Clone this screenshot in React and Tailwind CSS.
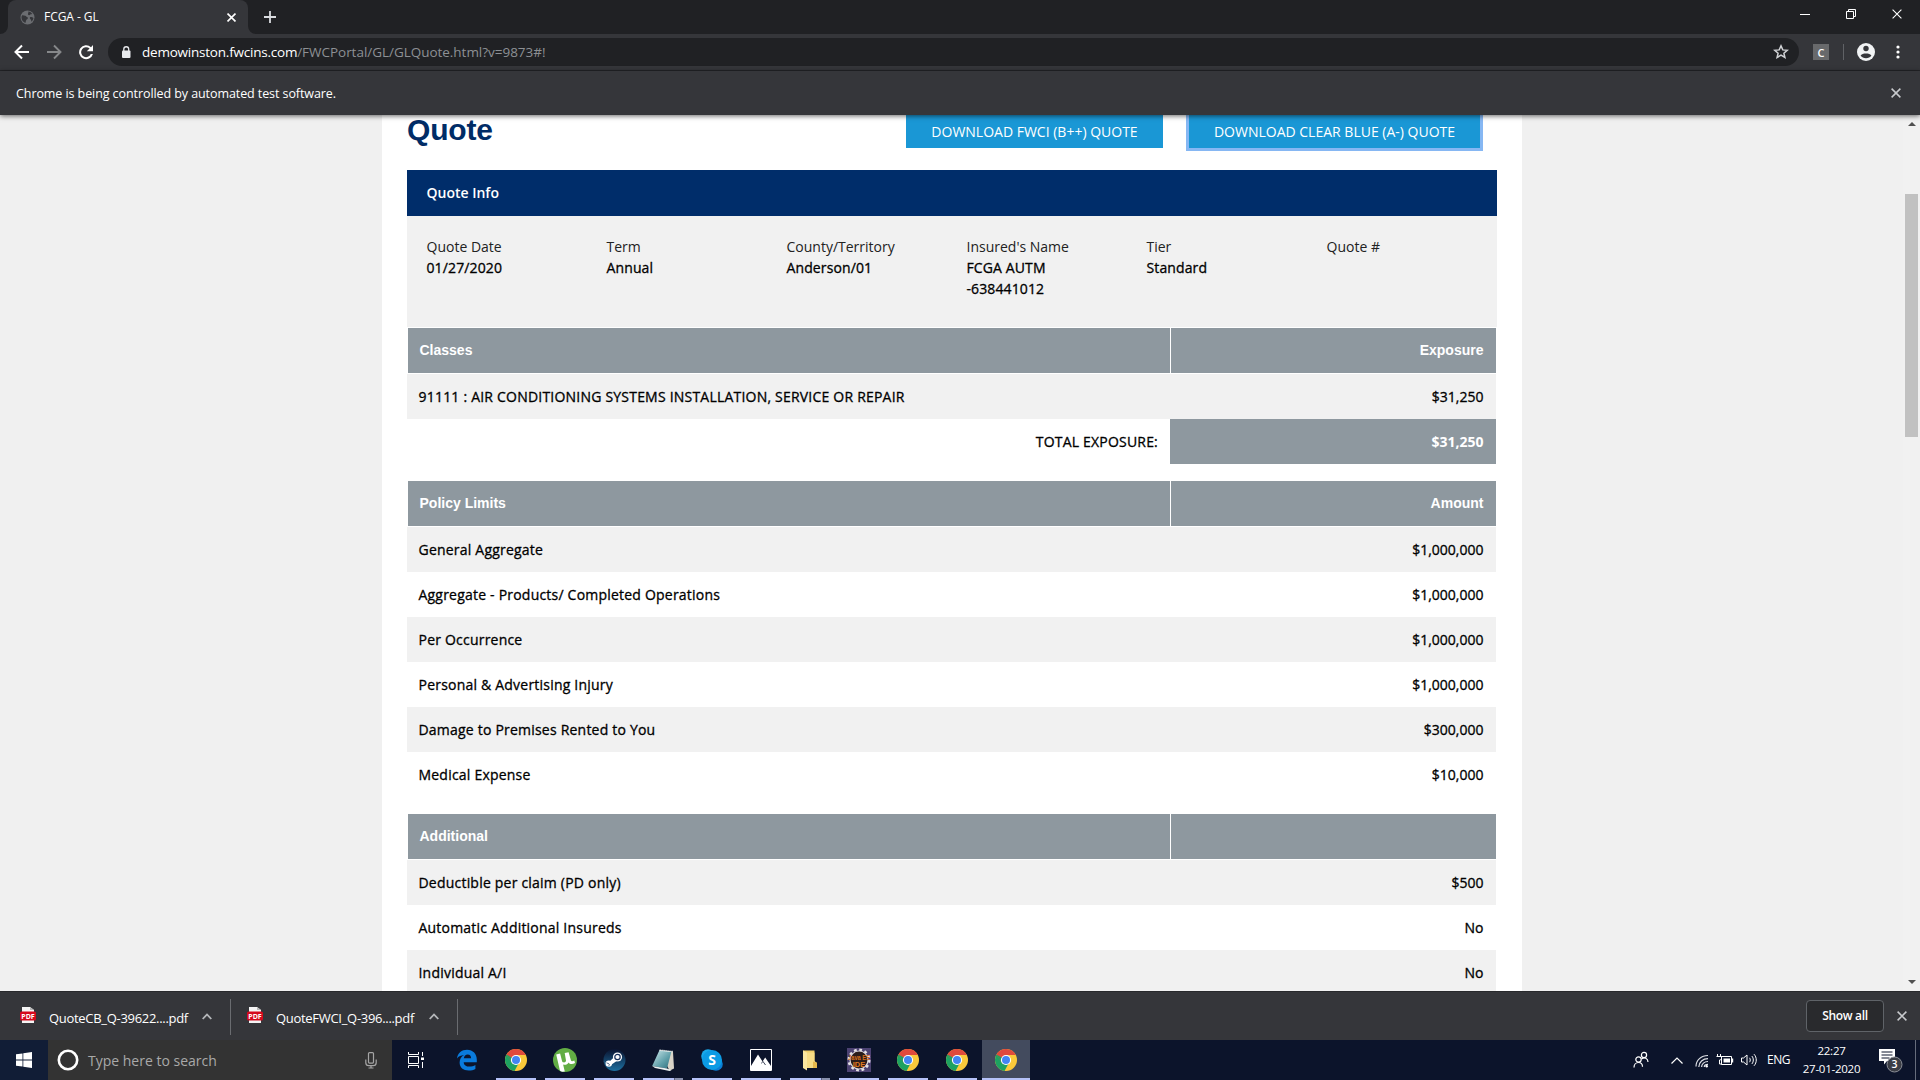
import React from 'react';

const LIMITS = [
  ['General Aggregate', '$1,000,000'],
  ['Aggregate - Products/ Completed Operations', '$1,000,000'],
  ['Per Occurrence', '$1,000,000'],
  ['Personal & Advertising Injury', '$1,000,000'],
  ['Damage to Premises Rented to You', '$300,000'],
  ['Medical Expense', '$10,000'],
];

const ADDITIONAL = [
  ['Deductible per claim (PD only)', '$500'],
  ['Automatic Additional Insureds', 'No'],
  ['Individual A/I', 'No'],
];

const INFO = [
  ['Quote Date', ['01/27/2020']],
  ['Term', ['Annual']],
  ['County/Territory', ['Anderson/01']],
  ["Insured's Name", ['FCGA AUTM', '-638441012']],
  ['Tier', ['Standard']],
  ['Quote #', []],
];

/* ---------- browser chrome ---------- */

function Cross({ size, width, color = '#fff' }) {
  return (
    <svg width={size} height={size} viewBox="0 0 10 10" fill="none" stroke={color} strokeWidth={width}>
      <path d="M.6.6l8.8 8.8M9.4.6L.6 9.4" />
    </svg>
  );
}

function TabStrip() {
  return (
    <div className="flex h-[34px] shrink-0 bg-[#202124] pl-2">
      <div className="relative flex w-[240px] items-center rounded-t-lg bg-[#35363a]">
        <svg className="absolute -left-2 bottom-0" width="8" height="8"><path d="M8 0v8H0a8 8 0 0 0 8-8z" fill="#35363a" /></svg>
        <svg className="absolute -right-2 bottom-0" width="8" height="8"><path d="M0 0v8h8a8 8 0 0 1-8-8z" fill="#35363a" /></svg>
        <svg className="ml-3 shrink-0" width="15" height="15" viewBox="0 0 15 15">
          <circle cx="7.5" cy="7.5" r="7" fill="#6b6d71" />
          <path d="M2.2 5.2c1.2-.2 2 .5 3 .5s1.200 1.300 2.300 1.600c1 .3.2 2-.8 2.300-.8.3-.6 1.700-1.300 3.300C2.900 12 1.500 9.800 1.500 7.500c0-.8.2-1.600.7-2.300zM8.300 1.500c1.800.2 3.200 1.200 4.100 2.600-.9.3-1.700-.2-2.300.6-.6.7-1.800.5-2.100-.3-.3-1 .8-1.500.3-2.900zM10 7.300c1.200-.6 2.500-.2 3.400.8-.1 1.400-.8 2.700-1.900 3.600-.4-1-.3-1.800-1-2.400-.6-.5-1-1.500-.5-2z" fill="#35363a" />
        </svg>
        <span className="ml-[9px] text-[12px] tracking-[-0.05px] text-white">FCGA - GL</span>
        <span className="ml-auto mr-[12px]"><Cross size={9} width={1.8} /></span>
      </div>
      <svg className="ml-4 mt-[11px]" width="12" height="12" fill="none" stroke="#dadce0" strokeWidth="1.8"><path d="M6 0v12M0 6h12" /></svg>
      <div className="ml-auto mr-[18px] flex h-[28px] items-center gap-[36px]">
        <span className="h-px w-[10px] bg-white" />
        <svg width="10" height="10" fill="none" stroke="#fff"><path d="M.5 2.500h7v7h-7zM2.500 2.500v-2h7v7h-2" /></svg>
        <Cross size={10} width={1.1} />
      </div>
    </div>
  );
}

function Toolbar() {
  return (
    <div className="flex h-[37px] shrink-0 items-center border-b border-[#242528] bg-[#35363a] pl-[14px] pr-[20px]">
      <svg width="16" height="16" viewBox="0 0 16 16" fill="none" stroke="#fff" strokeWidth="2"><path d="M15 8H2.200M8 1.500L1.500 8 8 14.500" /></svg>
      <svg className="ml-4" width="16" height="16" viewBox="0 0 16 16" fill="none" stroke="#86888a" strokeWidth="1.900"><path d="M1 8h12.800M8 1.500L14.500 8 8 14.500" /></svg>
      <svg className="ml-4" width="16" height="16" viewBox="0 0 16 16"><path d="M13 3.200A7 7 0 1 0 14.900 10h-2.100A5 5 0 1 1 11.600 4.500L8.800 7.200H15V1z" fill="#fff" /></svg>
      <div className="ml-[14px] flex h-[28px] flex-1 items-center rounded-full bg-[#202124] pl-[13px] pr-[10px]">
        <svg width="10" height="13" viewBox="0 0 10 13"><rect x="1" y="4.500" width="8.500" height="7.500" rx="1" fill="#e8eaed" /><path d="M2.800 5V3.200a2.450 2.450 0 0 1 4.900 0V5" fill="none" stroke="#e8eaed" strokeWidth="1.300" /></svg>
        <span className="ml-[11px] text-[13.5px] tracking-[-0.22px] text-white">demowinston.fwcins.com</span>
        <span className="text-[13.5px] tracking-[-0.03px] text-[#8d9094]">/FWCPortal/GL/GLQuote.html?v=9873#!</span>
        <svg className="ml-auto" width="16" height="16" viewBox="0 0 16 16" fill="none" stroke="#d0d2d5" strokeWidth="1.500"><path d="M8 1.900l1.800 4 4.400.4-3.300 2.900 1 4.300L8 11.200l-3.900 2.300 1-4.300L1.800 6.300l4.400-.4z" /></svg>
      </div>
      <span className="ml-[14px] flex size-4 items-center justify-center bg-[#68696b] text-[11px] font-semibold leading-none text-white">C</span>
      <span className="ml-[14px] h-4 w-px bg-[#606266]" />
      <svg className="ml-[13px]" width="18" height="18" viewBox="0 0 18 18"><circle cx="9" cy="9" r="9" fill="#f1f3f4" /><circle cx="9" cy="5.500" r="2.700" fill="#35363a" /><path d="M3.600 12.600C4.200 10.900 6.800 10.400 9 10.400s4.800.5 5.400 2.200C13.200 14.300 11.300 15.300 9 15.300s-4.200-1-5.400-2.700z" fill="#35363a" /></svg>
      <svg className="ml-[21px]" width="4" height="14" fill="#fff"><circle cx="2" cy="2" r="1.600" /><circle cx="2" cy="7" r="1.600" /><circle cx="2" cy="12" r="1.600" /></svg>
    </div>
  );
}

function InfoBar() {
  return (
    <div className="relative z-10 flex h-[44px] shrink-0 items-center bg-[#35363a] pl-4 pr-[19px] shadow-[0_1px_5px_rgba(0,0,0,0.6)]">
      <span className="pt-[2px] text-[12.5px] tracking-[-0.08px] text-white">Chrome is being controlled by automated test software.</span>
      <span className="ml-auto"><Cross size={10} width={1.5} color="#c8cacd" /></span>
    </div>
  );
}

/* ---------- quote page ---------- */

function HeadRow({ left, right }) {
  return (
    <div className="flex h-[46px] gap-px border-b border-white pl-px pr-px font-['Liberation_Sans',sans-serif] text-[14px] font-bold text-white">
      <div className="flex w-[762px] items-center bg-[#8e989f] pl-[11.5px]">{left}</div>
      <div className="flex flex-1 items-center justify-end bg-[#8e989f] pr-[12.5px]">{right}</div>
    </div>
  );
}

function Rows({ items }) {
  return items.map(([name, value], i) => (
    <div key={name} className={`mr-px flex h-[45px] items-center justify-between pl-[11.5px] pr-[12.5px] [-webkit-text-stroke:0.3px_#000] ${i % 2 ? 'bg-white' : 'bg-[#f1f1f1]'}`}>
      <span className="tracking-[0.21px]">{name}</span>
      <span>{value}</span>
    </div>
  ));
}

function QuotePage() {
  return (
    <div className="w-[1140px] bg-white px-[25px] text-[14px] text-black">
      <div className="flex h-[55px] items-start">
        <h1 className="font-['Liberation_Sans',sans-serif] text-[30px] font-bold leading-[30px] tracking-[-0.2px] text-[#002c66]">Quote</h1>
        <div className="ml-auto mr-[17px] flex gap-[26px] text-white">
          <button className="h-[33px] w-[257px] bg-[#1a97d5]">DOWNLOAD FWCI (B++) QUOTE</button>
          <button className="h-[33px] w-[291px] bg-[#1a97d5] outline-[3px] outline-[#86b7f3]">DOWNLOAD CLEAR BLUE (A-) QUOTE</button>
        </div>
      </div>
      <div className="flex h-[46px] items-center bg-[#002d6a] pb-px pl-[19.5px] font-semibold text-white">Quote Info</div>
      <div className="flex h-[111px] bg-[#f1f1f1] pl-[19.5px] pt-5 leading-[21px]">
        {INFO.map(([label, lines]) => (
          <div key={label} className="w-[180px] shrink-0 last:w-[150px]">
            <div className="text-[#222]">{label}</div>
            {lines.map((l) => <div key={l} className="tracking-[0.12px] [-webkit-text-stroke:0.3px_#000]">{l}</div>)}
          </div>
        ))}
      </div>
      <div className="h-px bg-white" />
      <HeadRow left="Classes" right="Exposure" />
      <Rows items={[['91111 : AIR CONDITIONING SYSTEMS INSTALLATION, SERVICE OR REPAIR', '$31,250']]} />
      <div className="mr-px flex h-[45px]">
        <div className="flex w-[763px] items-center justify-end pr-[12px] tracking-[0.2px] [-webkit-text-stroke:0.3px_#000]">TOTAL EXPOSURE:</div>
        <div className="flex flex-1 items-center justify-end bg-[#8e989f] pr-[12.5px] font-bold text-white">$31,250</div>
      </div>
      <div className="mt-[17px]"><HeadRow left="Policy Limits" right="Amount" /></div>
      <Rows items={LIMITS} />
      <div className="mt-[17px]"><HeadRow left="Additional" right="" /></div>
      <Rows items={ADDITIONAL} />
    </div>
  );
}

function Scrollbar() {
  return (
    <div className="flex w-[17px] flex-col items-center bg-[#f1f1f1] pt-[7px] pb-[7px]">
      <svg width="8" height="4"><path d="M0 4l4-4 4 4z" fill="#505050" /></svg>
      <div className="mt-[68px] h-[243px] w-[13px] bg-[#c1c1c1]" />
      <svg className="mt-auto" width="8" height="4"><path d="M0 0l4 4 4-4z" fill="#505050" /></svg>
    </div>
  );
}

/* ---------- download shelf ---------- */

function Download({ name }) {
  return (
    <div className="flex h-full w-[227px] items-center">
      <svg className="-mt-[3px] ml-[15px]" width="18" height="18" viewBox="0 0 18 18">
        <path d="M3 1h8l4 3v13H3z" fill="#f4f4f4" /><path d="M11 1v3h4z" fill="#b9b9b9" />
        <rect x="1" y="5.500" width="16" height="9" rx="1.500" fill="#d5091d" />
        <text x="9" y="12.600" textAnchor="middle" fontSize="7" fontWeight="700" fill="#fff" fontFamily="Open Sans">PDF</text>
      </svg>
      <span className="ml-[12px] mt-[5px] w-[140px] text-[13px] tracking-[-0.3px] text-white">{name}</span>
      <svg className="ml-[13px]" width="10" height="7" fill="none" stroke="#b5b7ba" strokeWidth="1.800"><path d="M.7 6L5 1.500 9.300 6" /></svg>
      <span className="ml-auto mt-px h-[36px] w-px bg-[#6a6c70]" />
    </div>
  );
}

function Shelf() {
  return (
    <div className="flex h-[49px] shrink-0 items-center border-t border-[#28292c] bg-[#35363a] pl-1 pr-[13px]">
      <Download name="QuoteCB_Q-39622....pdf" />
      <Download name="QuoteFWCI_Q-396....pdf" />
      <button className="ml-auto h-[32px] w-[78px] rounded-[4px] border border-[#5f6368] bg-[#292a2d] text-[12px] font-semibold tracking-[-0.35px] text-white">Show all</button>
      <span className="ml-[13px]"><Cross size={10} width={1.5} color="#c8cacd" /></span>
    </div>
  );
}

/* ---------- taskbar ---------- */

function Chrome() {
  return (
    <svg width="24" height="24" viewBox="0 0 24 24">
      <circle cx="12" cy="12" r="11" fill="#fbc93a" />
      <path d="M12 12L2.470 6.500A11 11 0 0 0 10.500 22.900l4.800-9z" fill="#1da261" />
      <path d="M12 12V7h9.800A11 11 0 0 0 2.470 6.500l5.200 8z" fill="#e04a3c" />
      <path d="M2.470 6.500L7.670 14.500 12 12z" fill="#1da261" />
      <circle cx="12" cy="12" r="5.100" fill="#fff" /><circle cx="12" cy="12" r="4" fill="#4285f4" />
    </svg>
  );
}

function Edge() {
  return (
    <svg width="22" height="22" viewBox="0 0 22 22"><path d="M1 9.500C1.700 4 5.800.8 11 .8c6 0 9.800 4.200 9.800 9.800v2.600H7.700c.1 3 2.700 4.400 5.700 4.400 2.300 0 4.300-.6 6-1.700v4.200c-1.900 1-4.100 1.500-6.700 1.500-5.400 0-9.100-3-9.100-8 0-3.300 1.700-6 4.500-7.500-3 .3-5.600 1.500-7.100 3.400zM7.800 9.200h7.300c0-2.400-1.200-3.800-3.400-3.800-2.100 0-3.500 1.400-3.900 3.800z" fill="#0a7bdc" /></svg>
  );
}

function Torrent() {
  return (
    <svg width="24" height="24" viewBox="0 0 24 24"><circle cx="12" cy="12" r="12" fill="#62ad44" /><path d="M3.200 6.400l3.900-.8 2 7.700c.5 1.700 3.900 1.700 3.900-.7L11.700 5l3.900-.8 2.300 8.100c.4 1.200 1.700 1 3.400.3l.7 2.400c-2.600 1.500-5.200 1.500-6.400-.6-1 2.200-3.300 2.900-5.500 2.200l1.700 6.800-2.300.3c-1.400 0-2.400-.3-2.700-1.600z" fill="#fff" /></svg>
  );
}

function Steam() {
  return (
    <svg width="24" height="24" viewBox="0 0 24 24">
      <defs><linearGradient id="st" x1="0" y1="0" x2="0" y2="1"><stop offset="0" stopColor="#0b1430" /><stop offset="1" stopColor="#1d6f9f" /></linearGradient></defs>
      <circle cx="12.500" cy="12" r="11" fill="url(#st)" />
      <path d="M.8 13.200l5 2 7.200-7 3.500 3.500-7.600 5.300z" fill="#fff" />
      <circle cx="15.500" cy="9" r="4.600" fill="#fff" /><circle cx="15.500" cy="9" r="2.700" fill="none" stroke="#16305a" strokeWidth="1.200" />
      <circle cx="6.800" cy="15.600" r="3.200" fill="#fff" />
      <path d="M4.500 14.800l2.500 1.100a1 1 0 0 1-.4 1.800" fill="none" stroke="#16305a" strokeWidth=".7" />
    </svg>
  );
}

function Notepad() {
  return (
    <svg width="24" height="24" viewBox="0 0 24 24">
      <defs><linearGradient id="np" x1="0" y1="0" x2="1" y2="1"><stop offset="0" stopColor="#cfe9ec" /><stop offset=".6" stopColor="#5f9fa9" /><stop offset="1" stopColor="#2e6c7a" /></linearGradient></defs>
      <path d="M8.500 2L22 3.500l1 17-4.500 2.200z" fill="#d9d4c8" />
      <path d="M8.300 2.500L20.300 4 16 20.500 1.200 18z" fill="url(#np)" />
      <path d="M1.200 18L16 20.500l4.500 1.700-2 .8L4 20z" fill="#e9efef" />
      <path d="M8.500 2.200L21.800 3.600" stroke="#e9f4f5" strokeWidth="1.500" strokeDasharray="1.200 .8" />
    </svg>
  );
}

function Skype() {
  return (
    <svg width="22" height="22" viewBox="0 0 22 22"><circle cx="7" cy="7" r="6.800" fill="#19a9ea" /><circle cx="15" cy="15" r="6.800" fill="#0a7ed6" /><circle cx="11" cy="11" r="10" fill="#0c9be4" /><text x="11" y="16" textAnchor="middle" fontSize="14" fontWeight="700" fontFamily="Open Sans" fill="#fff">S</text></svg>
  );
}

function Photos() {
  return (
    <svg width="22" height="22" viewBox="0 0 22 22"><path d="M.5.5h21v21H.5z" fill="none" stroke="#fff" /><path d="M1 17l7-11.500 4.500 7 2.700-4L21 17v4H1z" fill="#fff" /><path d="M11.200 14.300l1.800-1.800 2.500 3.500" fill="none" stroke="#0d1730" strokeWidth=".8" /></svg>
  );
}

function Folder() {
  return (
    <svg width="16" height="22" viewBox="0 0 16 22"><path d="M1 1.500h11.500V12L15 14v5H4l-3-2z" fill="#f1cf6b" /><path d="M1 1.500l4 2v18l-4-2.500z" fill="#fbe7a0" /><path d="M5 3.500h7.500V19H5z" fill="#f7dc85" /><path d="M11 12.500l4 1.200V19h-4z" fill="#e6b84c" /></svg>
  );
}

function JavaIde() {
  return (
    <svg width="24" height="24" viewBox="0 0 24 24" overflow="visible">
      <path d="M0 0h24v24H0z" fill="#4c4272" />
      <circle cx="12" cy="12" r="10.200" fill="none" stroke="#e6e2e6" strokeWidth="2.600" strokeDasharray="2.700 2.640" />
      <circle cx="12" cy="12" r="9" fill="#2b1d1c" stroke="#d9d5da" strokeWidth="1.200" />
      <text x="1" y="11.500" fontSize="6.500" fontWeight="700" fontFamily="Liberation Sans" fill="#d9701d" textLength="22" lengthAdjust="spacingAndGlyphs">Java EE</text>
      <text x="12" y="18.600" textAnchor="middle" fontSize="7.500" fontWeight="700" fontFamily="Liberation Sans" fill="#e07a1f">IDE</text>
    </svg>
  );
}

const APPS = [
  { Icon: Edge, line: false }, { Icon: Chrome, line: true }, { Icon: Torrent, line: true }, { Icon: Steam, line: true },
  { Icon: Notepad, line: true, multi: true }, { Icon: Skype, line: true }, { Icon: Photos, line: true }, { Icon: Folder, line: true, multi: true },
  { Icon: JavaIde, line: true }, { Icon: Chrome, line: true }, { Icon: Chrome, line: true }, { Icon: Chrome, line: true, active: true },
];

function AppButton({ Icon, line, multi, active }) {
  return (
    <div className={`flex h-10 flex-col items-center ${active ? 'w-12 bg-[#434b5e]' : 'w-[49px] pl-1 pr-[5px]'}`}>
      <div className="flex h-[38px] items-center pt-[2px]"><Icon /></div>
      {line && (
        <div className="flex h-[2px] w-full">
          <span className="flex-1 bg-[#b6c2f8]" />
          {multi && <span className="w-[9px] border-l border-[#5a6180] bg-[#8890ac]" />}
        </div>
      )}
    </div>
  );
}

function Tray() {
  return (
    <div className="ml-auto flex items-center text-[11.5px] text-white">
      <svg width="16" height="18" viewBox="0 0 16 18" fill="none" stroke="#fff" strokeWidth="1.200"><circle cx="5.500" cy="8.500" r="2.700" /><path d="M1 16.500c0-3 2-5 4.500-5s4 2 4 4.300" /><circle cx="11" cy="4" r="2.600" /><path d="M8.500 8c3-2.300 6.500-.5 6.500 3" /></svg>
      <svg className="ml-[22px]" width="12" height="7" fill="none" stroke="#fff" strokeWidth="1.200"><path d="M.5 6.500L6 1l5.500 5.500" /></svg>
      <svg className="ml-[12px] mt-[2px]" width="14" height="14" viewBox="0 0 14 14" fill="none" stroke="#dfe1e6" strokeWidth="1.200"><path d="M1 12.500C1 6.200 6.200 1.500 13 1.500M3.800 13C3.800 8 8 4.600 13 4.600M6.600 13c0-3 2.700-5.500 6.400-5.500M9.300 13c0-1.500 1.700-2.700 3.700-2.700" /><circle cx="11.700" cy="12.300" r="1.200" fill="#fff" stroke="none" /></svg>
      <svg className="ml-[7px]" width="18" height="14" viewBox="0 0 18 14"><path d="M5.500 3.500h10v8h-10z" fill="none" stroke="#fff" /><path d="M7.500 5.500h6.500v4H7.500zM16 5.500h1.200v4H16z" fill="#fff" /><path d="M1.500 1v2.500M4.500 1v2.500M.5 3.500h5v2c0 1-1 1.500-2 1.500v4h2.500" fill="none" stroke="#fff" /></svg>
      <svg className="ml-[6px]" width="18" height="14" viewBox="0 0 18 14" fill="none" stroke="#fff"><path d="M1.500 5h2L7 2v10L3.500 9h-2z" /><path d="M9.500 4.800c1 1.200 1 3.200 0 4.400M11.800 3c2 2.200 2 5.800 0 8M14 1.200c3 3.200 3 8.400 0 11.600" /></svg>
      <span className="ml-[9px] text-[12px] tracking-[-0.5px]">ENG</span>
      <div className="ml-[12px] w-[59px] text-center leading-[18px] tracking-[-0.25px]"><div>22:27</div><div>27-01-2020</div></div>
      <svg className="ml-[17px]" width="26" height="26" viewBox="0 0 26 26"><path d="M1 2h16v12h-8l-3 3.500V14H1z" fill="#fff" /><path d="M3.500 5h11M3.500 8h11M3.500 11h8" stroke="#0c142c" strokeWidth="1.200" /><circle cx="16.500" cy="17.500" r="7.500" fill="#3a3d45" stroke="#8b8e96" /><text x="16.500" y="21.300" textAnchor="middle" fontSize="10.500" fontWeight="600" fontFamily="Open Sans" fill="#fff">3</text></svg>
      <span className="ml-[11px] mr-1 h-10 w-px bg-[#666c7c]" />
    </div>
  );
}

function Taskbar() {
  return (
    <div className="flex h-10 shrink-0 bg-[#0c142b]">
      <div className="flex w-12 items-center justify-center bg-[#111d36]">
        <svg width="16" height="16" viewBox="0 0 16 16" fill="#fff"><path d="M0 2.300l6.500-.9v6.200H0zM7.300 1.300L16 0v7.600H7.300zM0 8.400h6.500v6.200L0 13.700zM7.300 8.400H16V16l-8.700-1.300z" /></svg>
      </div>
      <div className="flex w-[344px] items-center bg-[#333] pl-[9px] pr-[15px]">
        <svg width="22" height="22"><circle cx="11" cy="11" r="9.200" fill="none" stroke="#fff" strokeWidth="2.600" /></svg>
        <span className="ml-[9px] text-[14px] text-[#a9a9a9]">Type here to search</span>
        <svg className="ml-auto" width="12" height="17" viewBox="0 0 12 17" fill="none" stroke="#a5a5a5" strokeWidth="1.200"><rect x="3.500" y=".6" width="5" height="10.500" rx="1" /><path d="M.8 7.500v3.200c0 2 1 3 3 3h4.400c2 0 3-1 3-3V7.500M6 13.700V16M3.500 16h5" /></svg>
      </div>
      <div className="flex w-[48px] items-center justify-center">
        <svg width="16" height="16" viewBox="0 0 16 16" fill="none" stroke="#fff"><path d="M.5 4.500h10v7H.5zM.5 0v2.500h10V0M.5 16v-2.500h10V16M14.500 0v4M14.500 10v6" /><path d="M13 5.500h3v2.500h-3z" fill="#fff" stroke="none" /></svg>
      </div>
      <div className="ml-[3px] flex">{APPS.map((a, i) => <AppButton key={i} {...a} />)}</div>
      <Tray />
    </div>
  );
}

export default function App() {
  return (
    <div className="flex h-[1080px] w-[1920px] flex-col overflow-hidden font-['Open_Sans',sans-serif]">
      <TabStrip />
      <Toolbar />
      <InfoBar />
      <div className="flex min-h-0 flex-1 overflow-hidden bg-[#f0f0f0] pl-[382px]">
        <QuotePage />
        <div className="ml-auto flex"><Scrollbar /></div>
      </div>
      <Shelf />
      <Taskbar />
    </div>
  );
}
